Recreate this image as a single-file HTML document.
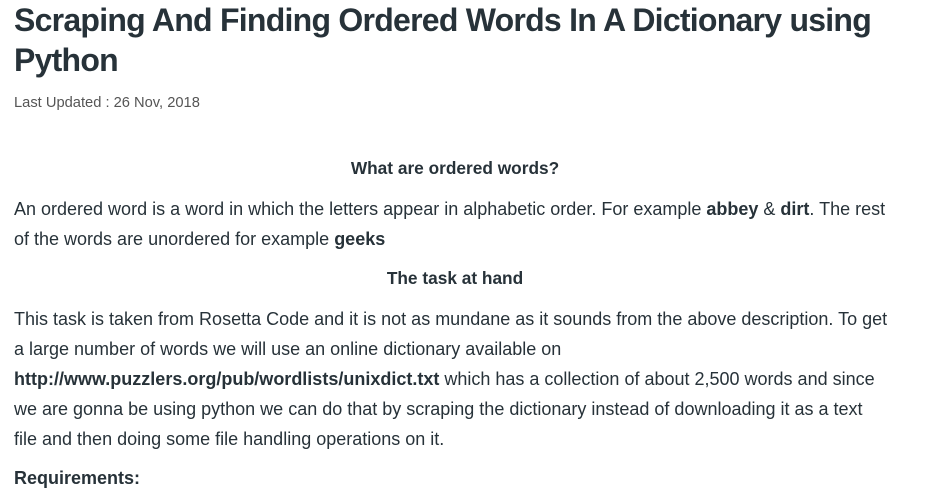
<!DOCTYPE html>
<html><head><meta charset="utf-8"><style>
body{margin:0;background:#fff;width:939px;height:499px;overflow:hidden;font-family:"Liberation Sans",sans-serif;color:#273239}
.a{position:absolute;left:14px;white-space:nowrap}
h1{position:absolute;left:14px;top:0;margin:0;font-size:32px;line-height:40px;font-weight:600;letter-spacing:-0.75px}
.d{top:95px;font-size:14.7px;color:#555}
.l{font-size:18px;line-height:30px;letter-spacing:0}
.c{position:absolute;left:0;width:910px;text-align:center;font-weight:bold;font-size:17.3px;line-height:30px}
b{font-weight:bold}
</style></head><body>
<h1>Scraping And Finding Ordered Words In A Dictionary using<br>Python</h1>
<div class="a d">Last Updated : 26 Nov, 2018</div>
<div class="c" style="top:153px">What are ordered words?</div>
<div class="a l" style="top:194px">An ordered word is a word in which the letters appear in alphabetic order. For example <b>abbey</b> &amp; <b>dirt</b>. The rest<br>of the words are unordered for example <b>geeks</b></div>
<div class="c" style="top:263px">The task at hand</div>
<div class="a l" style="top:304px">This task is taken from Rosetta Code and it is not as mundane as it sounds from the above description. To get<br>a large number of words we will use an online dictionary available on<br><b>http://www.puzzlers.org/pub/wordlists/unixdict.txt</b> which has a collection of about 2,500 words and since<br>we are gonna be using python we can do that by scraping the dictionary instead of downloading it as a text<br>file and then doing some file handling operations on it.</div>
<div class="a l" style="top:463px"><b>Requirements:</b></div>
</body></html>
